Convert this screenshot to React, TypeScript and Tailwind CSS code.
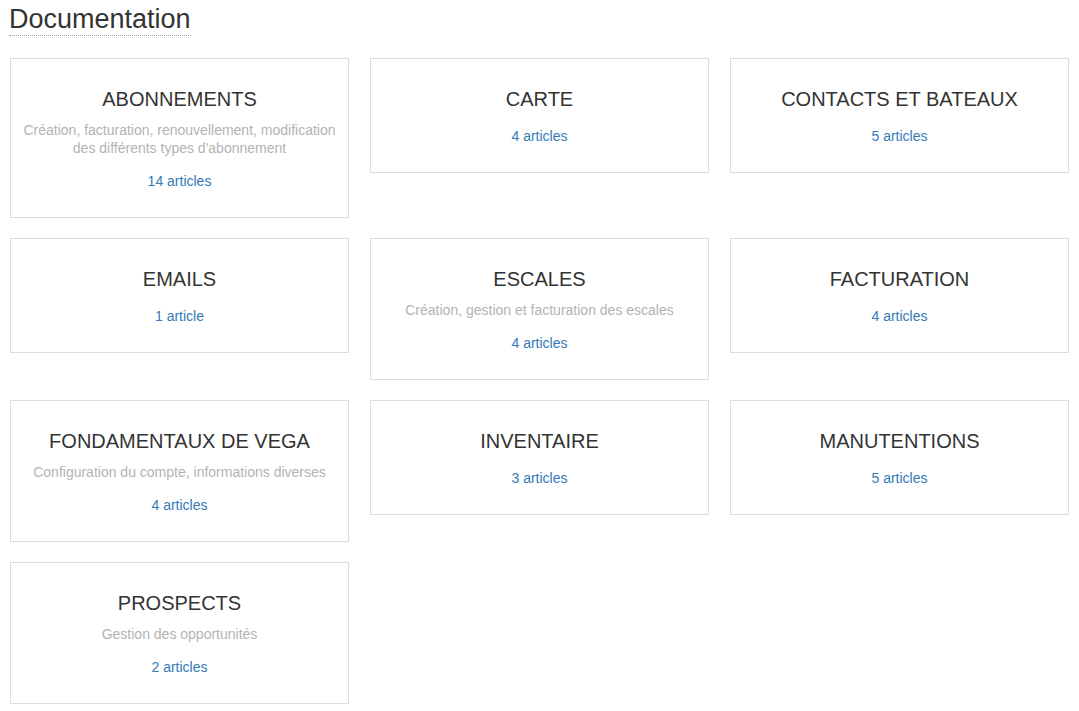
import React from "react";

type Category = {
  title: string;
  description?: string;
  count: string;
};

const CATEGORIES: Category[] = [
  {
    title: "ABONNEMENTS",
    description:
      "Création, facturation, renouvellement, modification des différents types d'abonnement",
    count: "14 articles",
  },
  { title: "CARTE", count: "4 articles" },
  { title: "CONTACTS ET BATEAUX", count: "5 articles" },
  { title: "EMAILS", count: "1 article" },
  {
    title: "ESCALES",
    description: "Création, gestion et facturation des escales",
    count: "4 articles",
  },
  { title: "FACTURATION", count: "4 articles" },
  {
    title: "FONDAMENTAUX DE VEGA",
    description: "Configuration du compte, informations diverses",
    count: "4 articles",
  },
  { title: "INVENTAIRE", count: "3 articles" },
  { title: "MANUTENTIONS", count: "5 articles" },
  {
    title: "PROSPECTS",
    description: "Gestion des opportunités",
    count: "2 articles",
  },
];

function CategoryCard({ category }: { category: Category }) {
  return (
    <a
      href="#"
      className="block border border-[#dddddd] bg-white px-[12px] pt-[29px] pb-[26px] text-center"
    >
      <h3 className="text-[20px] leading-[22px] text-[#333333]">
        {category.title}
      </h3>
      {category.description && (
        <p className="mt-[11px] text-[14px] leading-[18px] text-[#b3b3b3]">
          {category.description}
        </p>
      )}
      <p
        className={`${
          category.description ? "mt-[14px]" : "mt-[16px]"
        } text-[14px] leading-[20px] text-[#337ab7]`}
      >
        {category.count}
      </p>
    </a>
  );
}

export default function App() {
  return (
    <div
      className="min-h-screen bg-white px-[10px] pb-8"
      style={{ fontFamily: '"Liberation Sans", Arial, sans-serif' }}
    >
      <div className="pt-[5px]">
        <h1 className="-ml-[1px] inline-block border-b border-dotted border-[#999999] text-[27px] leading-[29.7px] text-[#333333]">
          Documentation
        </h1>
      </div>

      <div className="mt-[22px] grid grid-cols-3 items-start gap-x-[21px] gap-y-[20px]">
        {CATEGORIES.map((category) => (
          <CategoryCard key={category.title} category={category} />
        ))}
      </div>
    </div>
  );
}
